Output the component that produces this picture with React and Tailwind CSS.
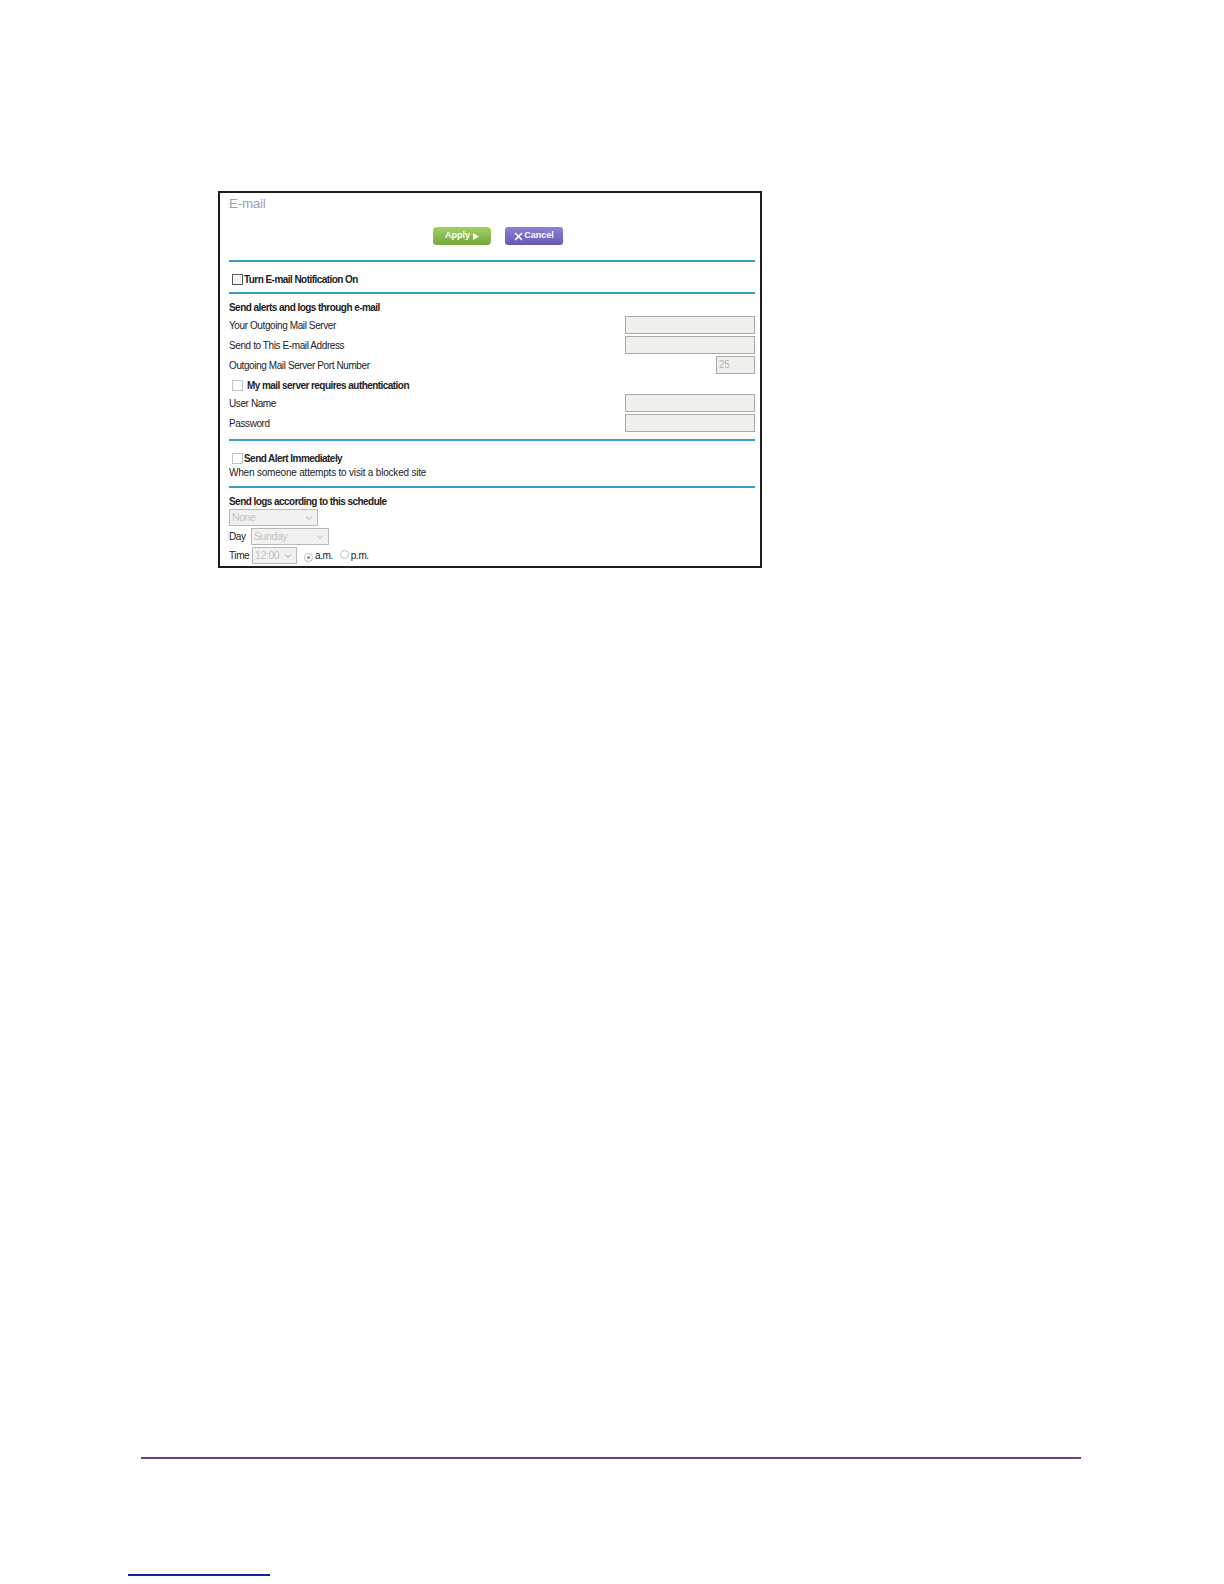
import React from 'react';

const font = { fontFamily: '"Liberation Sans", Arial, sans-serif' };

function Rule() {
  return <div className="h-[2px] w-full bg-[#3a9cc0]" />;
}

function Checkbox({ dark }) {
  return (
    <span
      className={
        'inline-block w-[11px] h-[11px] shrink-0 border ' +
        (dark ? 'border-[#5a5a5a] bg-[#f4f4f4]' : 'border-[#c4c4c4] bg-white')
      }
    />
  );
}

function TextInput({ width = 'w-[130px]', value }) {
  return (
    <div
      className={
        width +
        ' h-[18px] border border-[#a9a9a9] bg-[#efefec] text-[10px] text-[#b5b5b5] pl-[2px] leading-[16px]'
      }
    >
      {value}
    </div>
  );
}

function Chevron() {
  return (
    <svg width="8" height="6" viewBox="0 0 8 6" className="shrink-0">
      <path d="M1 1.5 L4 4.5 L7 1.5" fill="none" stroke="#c8c8c8" strokeWidth="1.2" />
    </svg>
  );
}

function FakeSelect({ width, value }) {
  return (
    <div
      className={
        width +
        ' h-[17px] border border-[#b9b9b9] bg-[#f1f1ef] flex items-center justify-between pl-[2px] pr-[4px] text-[10.5px] text-[#c2c2c2]'
      }
    >
      <span>{value}</span>
      <Chevron />
    </div>
  );
}

function Radio({ checked }) {
  return (
    <span className="inline-flex items-center justify-center w-[9px] h-[9px] rounded-full border border-[#bdbdbd] bg-white shrink-0">
      {checked && <span className="w-[3px] h-[3px] rounded-full bg-[#8a8a8a]" />}
    </span>
  );
}

function FieldRow({ label, children }) {
  return (
    <div className="flex items-center justify-between h-[20px]">
      <span>{label}</span>
      {children}
    </div>
  );
}

export default function App() {
  return (
    <div className="w-[1224px] h-[1584px] bg-white flex flex-col" style={font}>
      <div className="ml-[218px] mt-[191px] w-[544px] h-[377px] border-2 border-[#1e1e1e] pl-[9px] pr-[5px] flex flex-col text-[10px] text-[#222] tracking-[-0.4px]">
        <div className="h-[22px] flex items-center text-[13.5px] text-[#a19eb8] tracking-[-0.3px]">
          E-mail
        </div>

        <div className="mt-[12px] h-[18px] flex justify-center gap-[14px] pl-[12px]">
          <div className="w-[58px] h-[18px] rounded-[4px] bg-gradient-to-b from-[#a3d065] to-[#72a83a] flex items-center justify-center text-white font-bold text-[9px] tracking-normal">
            Apply
            <svg width="6" height="7" viewBox="0 0 6 7" className="ml-[3px]">
              <path d="M0 0 L6 3.5 L0 7 Z" fill="#ffffff" />
            </svg>
          </div>
          <div className="w-[58px] h-[18px] rounded-[3px] bg-gradient-to-b from-[#8c82d4] to-[#6759b4] flex items-center justify-center text-white font-bold text-[9px] tracking-normal">
            <svg width="9" height="9" viewBox="0 0 9 9" className="mr-[1px]">
              <path d="M1 1 L8 8 M8 1 L1 8" stroke="#ffffff" strokeWidth="1.6" />
            </svg>
            Cancel
          </div>
        </div>

        <div className="mt-[15px]">
          <Rule />
        </div>

        <div className="h-[30px] pt-[4px] flex items-center pl-[3px] gap-[1px] font-bold tracking-[-0.55px]">
          <Checkbox dark />
          <span>Turn E-mail Notification On</span>
        </div>

        <Rule />

        <div className="mt-[5px] h-[16px] flex items-center font-bold tracking-[-0.55px]">
          Send alerts and logs through e-mail
        </div>
        <FieldRow label="Your Outgoing Mail Server">
          <TextInput />
        </FieldRow>
        <FieldRow label="Send to This E-mail Address">
          <TextInput />
        </FieldRow>
        <FieldRow label="Outgoing Mail Server Port Number">
          <TextInput width="w-[39px]" value="25" />
        </FieldRow>
        <div className="h-[18px] pt-[2px] flex items-center pl-[3px] gap-[4px] font-bold tracking-[-0.55px]">
          <Checkbox />
          <span>My mail server requires authentication</span>
        </div>
        <FieldRow label="User Name">
          <TextInput />
        </FieldRow>
        <FieldRow label="Password">
          <TextInput />
        </FieldRow>

        <div className="mt-[6px]">
          <Rule />
        </div>

        <div className="mt-[9px] h-[16px] flex items-center pl-[3px] gap-[1px] font-bold tracking-[-0.55px]">
          <Checkbox />
          <span>Send Alert Immediately</span>
        </div>
        <div className="h-[12px] flex items-center text-[10px] tracking-[-0.2px]">
          When someone attempts to visit a blocked site
        </div>

        <div className="mt-[8px]">
          <Rule />
        </div>

        <div className="mt-[6px] h-[14px] flex items-center font-bold tracking-[-0.55px]">
          Send logs according to this schedule
        </div>
        <div className="mt-[1px] flex">
          <FakeSelect width="w-[89px]" value="None" />
        </div>
        <div className="mt-[2px] flex items-center">
          <span className="w-[22px]">Day</span>
          <FakeSelect width="w-[78px]" value="Sunday" />
        </div>
        <div className="mt-[2px] flex items-center">
          <span className="w-[23px]">Time</span>
          <FakeSelect width="w-[45px]" value="12:00" />
          <span className="ml-[7px] mr-[2px]">
            <Radio checked />
          </span>
          <span>a.m.</span>
          <span className="ml-[7px] mr-[2px]">
            <Radio />
          </span>
          <span>p.m.</span>
        </div>
      </div>

      <div className="mt-[889px] ml-[141px] w-[940px] h-[2px] bg-[#6a3d86]" />
      <div className="mt-[115px] ml-[128px] w-[142px] h-[2px] bg-[#1b1f8f]" />
    </div>
  );
}
